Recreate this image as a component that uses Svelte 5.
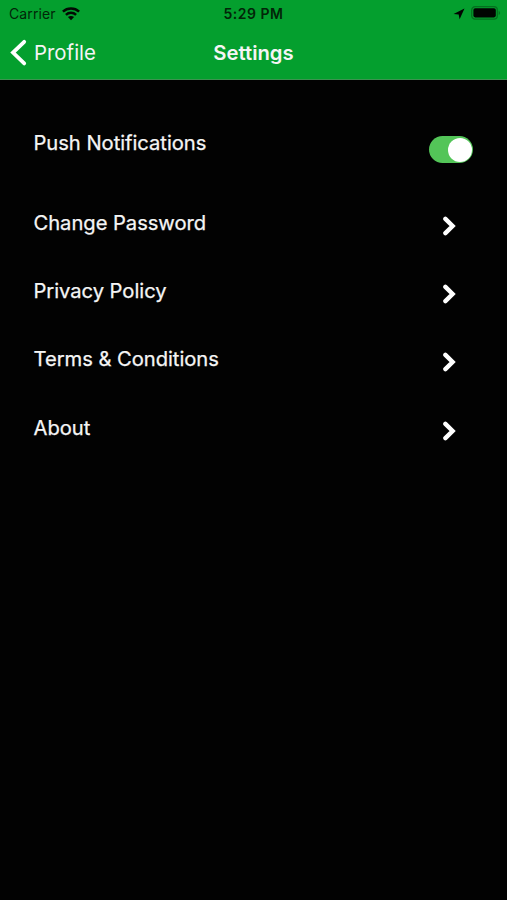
<script>
  let push = true;
  const items = ["Change Password", "Privacy Policy", "Terms & Conditions", "About"];

  function togglePush() {
    push = !push;
  }
</script>

<div class="screen">
  <header>
    <div class="status">
      <div class="left">
        <span class="carrier">Carrier</span>
        <svg class="wifi" width="18" height="14" viewBox="0 0 18 14">
          <path d="M.9 4.6C5.4 .5 12.6 .5 17.1 4.6" />
          <path d="M3.9 7.8C6.8 5.1 11.2 5.1 14.1 7.8" />
          <path class="dot" d="M9 13.2L5.9 10.1C7.6 8.6 10.4 8.6 12.1 10.1Z" />
        </svg>
      </div>
      <span class="time">5:29 PM</span>
      <div class="right">
        <svg class="loc" width="12" height="12" viewBox="0 0 12 12">
          <path d="M11.5 .4L6.6 11.2L5.7 6.6L.6 6Z" />
        </svg>
        <svg class="battery" width="30" height="14" viewBox="0 0 30 14">
          <rect class="shell" x=".7" y=".7" width="25.6" height="12.4" rx="3.4" />
          <rect x="2.4" y="2.2" width="22.4" height="9.2" rx="1.8" />
          <path class="cap" d="M27.7 4.7C29.5 5.5 29.5 8.3 27.7 9.1Z" />
        </svg>
      </div>
    </div>
    <nav>
      <button class="back">
        <svg width="18" height="28" viewBox="0 0 18 28">
          <path d="M14.2 2.8L3 13.6L14.2 24.4" />
        </svg>
        <span>Profile</span>
      </button>
      <h1>Settings</h1>
      <div></div>
    </nav>
  </header>

  <main>
    <div class="row first">
      <span class="label">Push Notifications</span>
      <button class="toggle" class:on={push} on:click={togglePush} aria-label="Push Notifications">
        <span class="knob"></span>
      </button>
    </div>
    {#each items as item}
      <div class="row">
        <span class="label">{item}</span>
        <svg class="chevron" width="14" height="20" viewBox="0 0 14 20">
          <path d="M2.4 2.9L9.6 10L2.4 17.1" />
        </svg>
      </div>
    {/each}
  </main>
</div>

<style>
:global(body) {
  background: #020202;
}

.screen {
  min-height: 900px;
  background: #020202;
  color: #f5f5f5;
  font-family: Inter, "Liberation Sans", sans-serif;
  box-sizing: border-box;
}

header {
  height: 80px;
  box-sizing: border-box;
  background: #049f2e;
  border-bottom: 1px solid #3c9350;
}

.status, nav {
  display: grid;
  grid-template-columns: 1fr auto 1fr;
  align-items: center;
}

.status {
  height: 27px;
  color: #022508;
  font-size: 14px;
}

.left {
  display: flex;
  align-items: center;
  gap: 6px;
  padding-left: 9px;
}

.carrier {
  letter-spacing: 0.1px;
}

.time {
  font-weight: 600;
  letter-spacing: 0.5px;
}

.right {
  display: flex;
  justify-content: flex-end;
  align-items: center;
  gap: 6px;
  padding-right: 6px;
}

.battery {
  margin-top: -1px;
}

.wifi path {
  fill: none;
  stroke: #020a03;
  stroke-width: 2.5;
}

.wifi .dot {
  fill: #020a03;
  stroke: none;
}

.loc path, .battery rect {
  fill: #010401;
}

.battery .shell {
  fill: none;
  stroke: #04701f;
  stroke-width: 1.3;
}

.battery .cap {
  fill: #04701f;
}

nav {
  height: 51px;
}

button {
  margin: 0;
  padding: 0;
  border: 0;
  background: none;
  color: inherit;
  font: inherit;
}

.back {
  display: flex;
  align-items: center;
  gap: 6px;
  padding-left: 10px;
  font-size: 20.4px;
}

.back path, .chevron path {
  fill: none;
  stroke: #fff;
  stroke-width: 3.8;
  stroke-linecap: round;
}

h1 {
  margin: 0;
  font-size: 20.3px;
  font-weight: 600;
}

main {
  padding: 30px 34px 0 33.5px;
}

.row {
  display: flex;
  justify-content: space-between;
  align-items: flex-start;
  height: 68.4px;
  padding-top: 21px;
  box-sizing: border-box;
}

.first {
  height: 79.6px;
}

.label {
  font-size: 20.2px;
  line-height: 23.6px;
  font-weight: 400;
  letter-spacing: -0.04px;
  -webkit-text-stroke: 0.25px;
}

.toggle {
  width: 44px;
  height: 27px;
  margin-top: 5px;
  padding: 1.5px;
  box-sizing: border-box;
  border-radius: 14px;
  background: #39393d;
  display: flex;
}

.on {
  justify-content: flex-end;
  background: #53c558;
}

.knob {
  width: 24px;
  height: 24px;
  border-radius: 50%;
  background: #fff;
}

.chevron {
  margin: 5px 16px 0 0;
}

.chevron path {
  stroke-width: 4.4;
}
</style>
